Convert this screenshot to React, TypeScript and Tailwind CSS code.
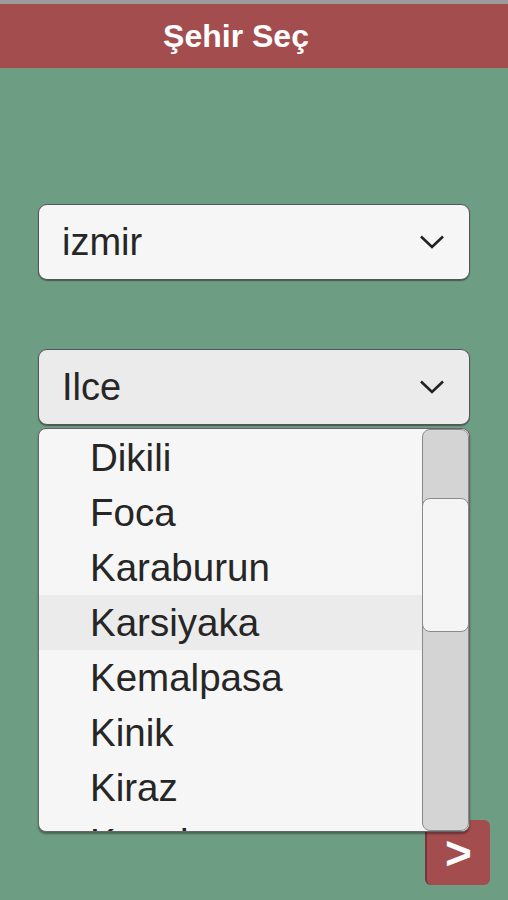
const ilceler = [
  "Dikili",
  "Foca",
  "Karaburun",
  "Karsiyaka",
  "Kemalpasa",
  "Kinik",
  "Kiraz",
  "Konak",
];

function Chevron() {
  return (
    <svg width="26" height="16" viewBox="0 0 26 16" className="shrink-0">
      <path d="M2 2.5 L13 13 L24 2.5" fill="none" stroke="#222" strokeWidth="2.6" />
    </svg>
  );
}

export default function App() {
  return (
    <div
      className="min-h-[900px] bg-[#6d9d82]"
      style={{ fontFamily: '"Liberation Sans", Arial, sans-serif' }}
    >
      <div className="h-[4px] bg-[#9b9b9b]" />
      <header className="flex h-[64px] items-center justify-center bg-[#a34d4f] pr-[36px]">
        <h1 className="text-[32px] font-bold text-white">Şehir Seç</h1>
      </header>

      <div className="px-[38px] pt-[136px]">
        <div className="flex h-[76px] items-center justify-between rounded-[9px] border border-[#555] bg-[#f6f6f6] pl-[23px] pr-[24px] shadow-[0_1px_1px_rgba(0,0,0,0.4)]">
          <span className="text-[38px] text-[#262626]">izmir</span>
          <Chevron />
        </div>

        <div className="relative mt-[69px]">
          <div className="flex h-[76px] items-center justify-between rounded-[9px] border border-[#555] bg-[#ebebeb] pl-[23px] pr-[24px] shadow-[0_1px_1px_rgba(0,0,0,0.4)]">
            <span className="text-[38px] text-[#262626]">Ilce</span>
            <Chevron />
          </div>

          <div className="absolute left-0 right-0 top-[79px] z-10 flex h-[404px] overflow-hidden rounded-[8px] border border-[#666] bg-[#f6f6f6] shadow-[0_2px_2px_rgba(0,0,0,0.35)]">
            <ul className="h-[402px] flex-1 overflow-hidden pt-[1px]">
              {ilceler.map((name) => (
                <li
                  key={name}
                  className={
                    "flex h-[55px] items-center pl-[51px] text-[38.5px] text-[#262626] " +
                    (name === "Karsiyaka" ? "bg-[#ebebeb]" : "")
                  }
                >
                  {name}
                </li>
              ))}
            </ul>
            <div className="relative w-[47px] shrink-0 rounded-[8px] border border-[#8a8a8a] bg-[#d4d4d4]">
              <div className="absolute left-[-1px] right-[-1px] top-[68px] h-[134px] rounded-[8px] border border-[#8a8a8a] bg-[#f5f5f5]" />
            </div>
          </div>
        </div>

        <div className="mt-[395px] flex justify-end">
          <button className="-mr-[20px] flex h-[65px] w-[65px] items-center justify-center rounded-[6px] border-l-2 border-[#7a3436] bg-[#a34d4f] text-[46px] font-bold leading-none text-white">
            &gt;
          </button>
        </div>
      </div>
    </div>
  );
}
